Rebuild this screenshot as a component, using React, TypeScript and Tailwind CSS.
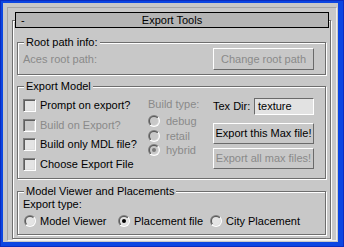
import React from "react";

const DIS = "text-[#8a8a8a]";

function Radio({ id, enabled, checked }: { id: string; enabled: boolean; checked?: boolean }) {
  return (
    <svg width="12" height="12" viewBox="0 0 12 12" className="block shrink-0">
      <defs>
        <linearGradient id={`ro${id}`} x1="0" y1="0" x2="1" y2="1">
          <stop offset="0.5" stopColor="#808080" />
          <stop offset="0.5" stopColor="#ffffff" />
        </linearGradient>
        <linearGradient id={`ri${id}`} x1="0" y1="0" x2="1" y2="1">
          <stop offset="0.5" stopColor="#5a5a5a" />
          <stop offset="0.5" stopColor="#dcdcdc" />
        </linearGradient>
      </defs>
      <circle cx="6" cy="6" r="6" fill={`url(#ro${id})`} />
      <circle cx="6" cy="6" r="5" fill={`url(#ri${id})`} />
      <circle cx="6" cy="6" r="4" fill={enabled ? "#e4e4e4" : "#c8c8c8"} />
      {checked && <circle cx="6" cy="6" r="2" fill={enabled ? "#000000" : "#7a7a7a"} />}
    </svg>
  );
}

function Check({ enabled }: { enabled: boolean }) {
  return (
    <div
      className={`h-[13px] w-[13px] shrink-0 border border-t-[#808080] border-l-[#808080] border-b-white border-r-white shadow-[inset_1px_1px_0_#5e5e5e,inset_-1px_-1px_0_#dcdcdc] ${
        enabled ? "bg-[#e4e4e4]" : "bg-[#c8c8c8]"
      }`}
    />
  );
}

function Btn({ children, enabled, className }: { children: React.ReactNode; enabled: boolean; className: string }) {
  return (
    <div
      className={`flex w-[101px] items-center justify-center border border-t-white border-l-white border-b-[#6a6a6a] border-r-[#6a6a6a] bg-[#c8c8c8] ${
        enabled ? "text-black" : DIS
      } ${className}`}
    >
      {children}
    </div>
  );
}

function Group({ label, className, children }: { label: string; className: string; children: React.ReactNode }) {
  return (
    <div
      className={`ml-[4px] flex w-[309px] flex-col border border-[#6e6e6e] shadow-[inset_1px_1px_0_#ffffff,1px_1px_0_#ffffff] ${className}`}
    >
      <div className="-mt-[7px] ml-[6px] h-[13px] self-start bg-[#c8c8c8] px-[2px]">{label}</div>
      {children}
    </div>
  );
}

export default function App() {
  return (
    <div className="h-[247px] w-[344px] bg-[#0c46e2] pb-[5px] pl-[3px] pr-[6px] pt-[3px] font-['Liberation_Sans',Arial,sans-serif] text-[11px] leading-[13px] text-black shadow-[inset_1px_1px_0_#0a2cc0,inset_-1px_-1px_0_#0a2cc0]">
      <div className="h-full w-full bg-[#c8c8c8] pb-[1px] pl-[4px] pr-[1px] pt-[4px]">
        <div className="h-full w-full border border-t-[#a4a4a4] border-l-[#a4a4a4] border-b-[#eeeeee] border-r-[#eeeeee] pl-[4px] pt-[12px]">
          <div className="flex h-[219px] w-[319px] flex-col border border-[#6e6e6e] shadow-[inset_1px_1px_0_#ffffff,1px_1px_0_#ffffff]">
            <div className="-mt-[9px] ml-[2px] grid h-[16px] w-[314px] grid-cols-[1fr_auto_1fr] items-center border border-black bg-[#b4b4b4]">
              <span className="pl-[5px]">-</span>
              <span>Export Tools</span>
              <span />
            </div>

            <Group label="Root path info:" className="mt-[14px]">
              <div className="-mt-[1px] mb-[4px] flex h-[22px] items-center justify-between pl-[5px] pr-[11px]">
                <span className={DIS}>Aces root path:</span>
                <Btn enabled={false} className="h-[22px]">
                  Change root path
                </Btn>
              </div>
            </Group>

            <Group label="Export Model" className="mt-[11px]">
              <div className="flex pb-[7px] pl-[5px]">
                <div className="flex w-[125px] flex-col">
                  <div className="mt-[6px] flex h-[13px] items-center gap-[4px]">
                    <Check enabled />
                    <span>Prompt on export?</span>
                  </div>
                  <div className="mt-[7px] flex h-[13px] items-center gap-[4px]">
                    <Check enabled={false} />
                    <span className={DIS}>Build on Export?</span>
                  </div>
                  <div className="mt-[6px] flex h-[13px] items-center gap-[4px]">
                    <Check enabled />
                    <span>Build only MDL file?</span>
                  </div>
                  <div className="mt-[7px] flex h-[13px] items-center gap-[4px]">
                    <Check enabled />
                    <span>Choose Export File</span>
                  </div>
                </div>
                <div className={`flex w-[65px] flex-col ${DIS}`}>
                  <div className="mt-[5px] h-[13px]">Build type:</div>
                  <div className="mt-[4px] flex h-[12px] items-center gap-[6px]">
                    <Radio id="bt1" enabled={false} />
                    <span>debug</span>
                  </div>
                  <div className="mt-[3px] flex h-[12px] items-center gap-[6px]">
                    <Radio id="bt2" enabled={false} />
                    <span>retail</span>
                  </div>
                  <div className="mt-[2px] flex h-[12px] items-center gap-[6px]">
                    <Radio id="bt3" enabled={false} checked />
                    <span>hybrid</span>
                  </div>
                </div>
                <div className="flex w-[101px] flex-col">
                  <div className="mt-[5px] flex h-[17px] items-center">
                    <span className="w-[41px]">Tex Dir:</span>
                    <div className="flex h-[17px] w-[60px] items-center border border-t-[#6a6a6a] border-l-[#6a6a6a] border-b-white border-r-white bg-[#e2e2e2] pl-[3px]">
                      texture
                    </div>
                  </div>
                  <Btn enabled className="mt-[8px] h-[21px]">
                    Export this Max file!
                  </Btn>
                  <Btn enabled={false} className="mt-[4px] h-[21px]">
                    Export all max files!
                  </Btn>
                </div>
              </div>
            </Group>

            <Group label="Model Viewer and Placements" className="mt-[12px]">
              <div className="h-[13px] pl-[5px]">Export type:</div>
              <div className="mb-[7px] mt-[4px] flex h-[12px] items-center pl-[6px]">
                <div className="flex w-[94px] items-center gap-[4px]">
                  <Radio id="et1" enabled />
                  <span>Model Viewer</span>
                </div>
                <div className="flex w-[92px] items-center gap-[4px]">
                  <Radio id="et2" enabled checked />
                  <span>Placement file</span>
                </div>
                <div className="flex items-center gap-[4px]">
                  <Radio id="et3" enabled />
                  <span>City Placement</span>
                </div>
              </div>
            </Group>
          </div>
        </div>
      </div>
    </div>
  );
}
